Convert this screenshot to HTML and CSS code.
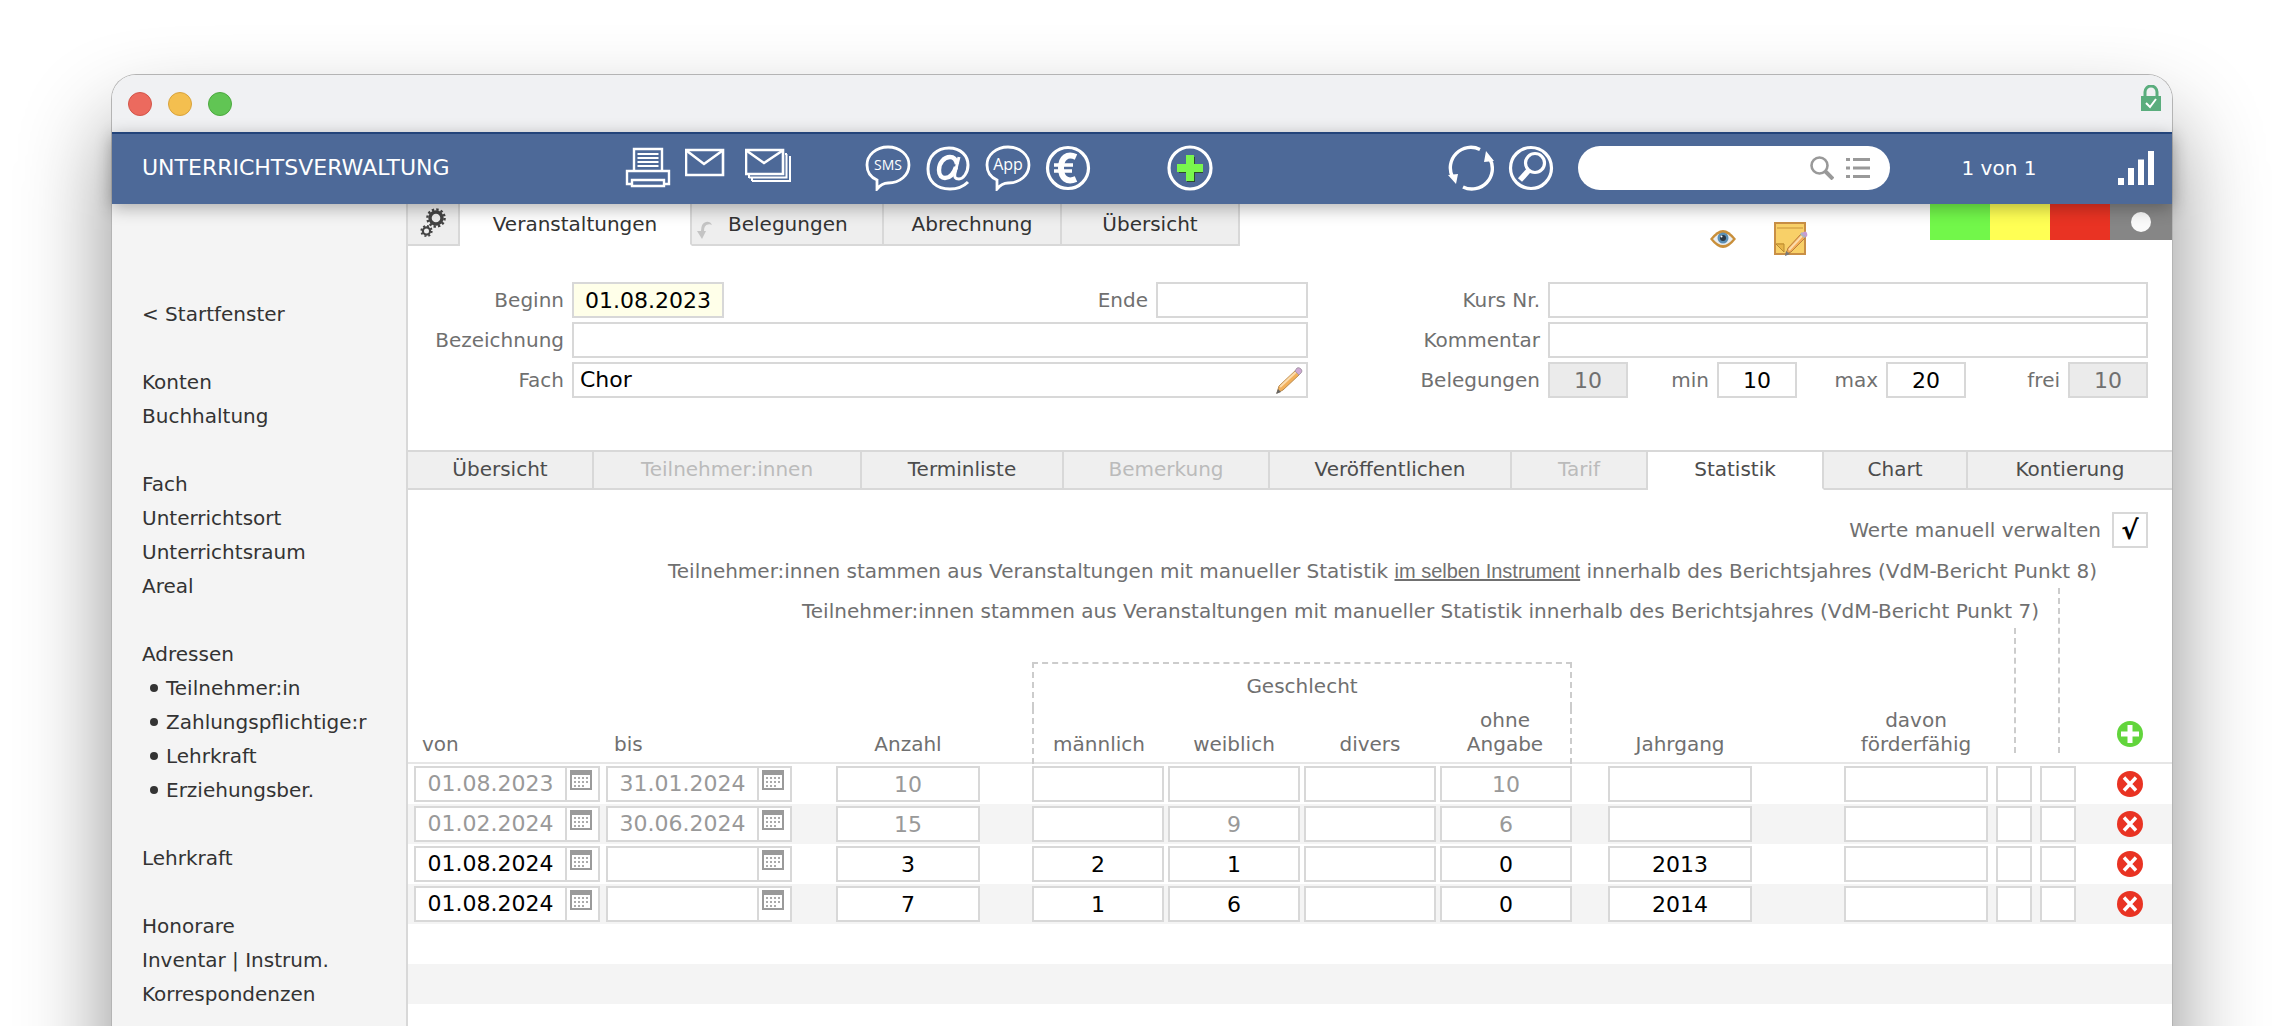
FILE: index.html
```html
<!DOCTYPE html>
<html lang="de">
<head>
<meta charset="utf-8">
<title>Unterrichtsverwaltung</title>
<link rel="stylesheet" href="styles.css">
</head>
<body>
<svg class="sprite" aria-hidden="true">
  <symbol id="calendar" viewBox="0 0 22 20">
    <rect x="1" y="1" width="20" height="18" fill="#fff" stroke="#9a9a9a" stroke-width="2"/>
    <rect width="22" height="5" fill="#9a9a9a"/>
    <path d="M4 8h14M4 12h14M4 16h11" stroke="#aaa" stroke-width="2" stroke-dasharray="2 2"/>
  </symbol>
  <symbol id="remove" viewBox="0 0 26 26">
    <circle cx="13" cy="13" r="13" fill="#e93323"/>
    <path d="M7 6.500l12 13M19 6.500L7 19.500" stroke="#fff" stroke-width="3.400"/>
  </symbol>
</svg>
<div class="window">
  <div class="titlebar">
    <span class="light light-close"></span>
    <span class="light light-min"></span>
    <span class="light light-max"></span>
    <svg class="lock" viewBox="0 0 20 26" width="20" height="26"><path d="M4 13V7a6 6 0 0 1 12 0v6" fill="none" stroke="#5aad7d" stroke-width="3"/><rect y="11" width="20" height="15" fill="#5aad7d"/><path d="M5 18l4 4 6-8" fill="none" stroke="#fff" stroke-width="2"/></svg>
  </div>

  <header class="toolbar">
    <h1>UNTERRICHTSVERWALTUNG</h1>
    <div class="tools tools-main">
      <button type="button" aria-label="Drucken"><svg viewBox="0 0 46 46"><g fill="none" stroke="#fff" stroke-width="2.400"><path d="M9 25V4h28v21"/><path d="M12.500 9h21M12.500 13h21M12.500 17h21M12.500 21h21" stroke-width="1.800"/><path d="M6 39H2V26h42v13h-4"/><path d="M7 41v-6h32v6z"/></g></svg></button>
      <button type="button" aria-label="E-Mail"><svg viewBox="0 0 46 46"><g fill="none" stroke="#fff" stroke-width="2.600"><path d="M1 5h37v25H1z"/><path d="M2 6l17 13L37 6"/></g></svg></button>
      <button type="button" aria-label="Serienmail"><svg viewBox="0 0 46 46"><g fill="none" stroke="#fff"><path d="M1 5h37v24H1z" stroke-width="2.600"/><path d="M2 6l17 12L37 6" stroke-width="2.600"/><path d="M4 32.500h37.500V9M7 36h38V12M40 9h2M44 12h2M4 30v3M7 33v3" stroke-width="2"/></g></svg></button>
      <button type="button" class="after-gap" aria-label="SMS"><svg viewBox="0 0 46 46"><path d="M12 35C5 32 2 26 2 20 2 10 11 2 23 2s21 8 21 18-9 18-21 18q-6 0-11 6z" fill="none" stroke="#fff" stroke-width="2.800"/><text x="23" y="25" class="bubble-text bubble-sms">SMS</text></svg></button>
      <button type="button" aria-label="Adresse"><svg viewBox="0 0 46 46"><g fill="none" stroke="#fff"><path d="M43 37c-4 4-10 7-18 7C11 44 3 36 3 24 3 11 12 3 24 3s19 8 19 17c0 8-5 14-9 14s-5-2-4-6l4-16" stroke-width="3"/><path d="M32 19c-1-5-4-7-7-7-6 0-11 6-11 13 0 6 3 8 6 8 5 0 9-5 11-11" stroke-width="4.400"/></g></svg></button>
      <button type="button" aria-label="App"><svg viewBox="0 0 46 46"><path d="M12 35C5 32 2 26 2 20 2 10 11 2 23 2s21 8 21 18-9 18-21 18q-6 0-11 6z" fill="none" stroke="#fff" stroke-width="2.800"/><text x="23" y="25" class="bubble-text bubble-app">App</text></svg></button>
      <button type="button" aria-label="Euro"><svg viewBox="0 0 46 46"><circle cx="23" cy="23" r="20.500" fill="none" stroke="#fff" stroke-width="3.200"/><g fill="none" stroke="#fff"><path d="M31 12c-9-4-15 1-15 11s6 15 15 11" stroke-width="6"/><path d="M9 20h19M9 26h18" stroke-width="3.400"/></g></svg></button>
      <button type="button" class="after-gap-wide" aria-label="Neu"><svg viewBox="0 0 46 46"><circle cx="23" cy="23" r="21" fill="none" stroke="#fff" stroke-width="3.200"/><path d="M20 12h8v8h8v8h-8v9h-8v-9h-8v-8h8z" fill="#2c4a2c"/><path d="M19 10h8v9h9v8h-9v9h-8v-9h-9v-8h9z" fill="#79f64d"/></svg></button>
    </div>
    <div class="tools tools-right">
      <button type="button" aria-label="Aktualisieren"><svg viewBox="0 0 46 46"><g fill="none" stroke="#fff" stroke-width="3.400"><path d="M32 4.500A20.500 20.500 0 0 0 4.500 32"/><path d="M15 42A20.500 20.500 0 0 0 42 14"/></g><path d="M0 30l10-1-2 10zM36 17l10-1-8-10z" fill="#fff"/></svg></button>
      <button type="button" aria-label="Suchen"><svg viewBox="0 0 46 46"><g fill="none" stroke="#fff"><circle cx="23" cy="23" r="20.500" stroke-width="3.200"/><circle cx="27" cy="18" r="9.500" stroke-width="3.200"/><path d="M21 25L12 35" stroke-width="5.500"/></g></svg></button>
      <div class="search">
        <input type="search" aria-label="Suche">
        <svg viewBox="0 0 24 24" width="24" height="24"><circle cx="9.500" cy="9.500" r="8" fill="none" stroke="#999" stroke-width="2.600"/><path d="M15 15l8 8" stroke="#999" stroke-width="4"/></svg>
        <svg viewBox="0 0 24 22" width="24" height="22"><path d="M0 2.500h4M7 2.500h17M0 11h4M7 11h17M0 19.500h4M7 19.500h17" stroke="#999" stroke-width="3"/></svg>
      </div>
      <span class="counter">1 von 1</span>
      <svg class="bars" viewBox="0 0 38 36" width="38" height="36"><path d="M1 28h6v7H1zM11 18h6v17h-6zM21 9.500h6V35h-6zM31 1h6v34h-6z" fill="#fff"/></svg>
    </div>
  </header>

  <div class="body">
    <nav class="sidebar">
      <ul>
        <li><a href="#">&lt; Startfenster</a></li>
      </ul>
      <ul>
        <li><a href="#">Konten</a></li>
        <li><a href="#">Buchhaltung</a></li>
      </ul>
      <ul>
        <li><a href="#">Fach</a></li>
        <li><a href="#">Unterrichtsort</a></li>
        <li><a href="#">Unterrichtsraum</a></li>
        <li><a href="#">Areal</a></li>
      </ul>
      <ul>
        <li><a href="#">Adressen</a></li>
        <li class="sub"><a href="#">Teilnehmer:in</a></li>
        <li class="sub"><a href="#">Zahlungspflichtige:r</a></li>
        <li class="sub"><a href="#">Lehrkraft</a></li>
        <li class="sub"><a href="#">Erziehungsber.</a></li>
      </ul>
      <ul>
        <li><a href="#">Lehrkraft</a></li>
      </ul>
      <ul>
        <li><a href="#">Honorare</a></li>
        <li><a href="#">Inventar | Instrum.</a></li>
        <li><a href="#">Korrespondenzen</a></li>
      </ul>
    </nav>

    <main class="main">
      <div class="top">
        <div class="tabs">
          <button type="button" class="tab tab-gear" aria-label="Einstellungen"><svg viewBox="0 0 26 30" width="26" height="30"><g fill="none" stroke="#444"><circle cx="16" cy="10" r="6" stroke-width="3.400"/><circle cx="16" cy="10" r="8.600" stroke-width="2.400" stroke-dasharray="2.400 2.100"/><circle cx="6.500" cy="23" r="3.600" stroke-width="2.200"/><circle cx="6.500" cy="23" r="5.200" stroke-width="1.800" stroke-dasharray="2 2.080"/></g></svg></button>
          <button type="button" class="tab tab-active">Veranstaltungen</button>
          <button type="button" class="tab tab-bel"><svg viewBox="0 0 16 18" width="16" height="18"><path d="M15 4Q13 0 9 1 4 2 4 10H0l5 8 4-8H7Q7 4 11 3.500 13 3 15 4z" fill="#c4c4c4"/></svg>Belegungen</button>
          <button type="button" class="tab">Abrechnung</button>
          <button type="button" class="tab">Übersicht</button>
        </div>
        <div class="top-icons">
          <svg viewBox="0 0 28 20" width="28" height="20"><path d="M1 10Q8 1 14 1t13 9q-7 9-13 9T1 10z" fill="#c98f3a"/><path d="M4 10q5-6 10-6t10 6q-5 6-10 6T4 10z" fill="#e9eef2"/><circle cx="14" cy="9" r="5.500" fill="#5b8fb5"/><circle cx="14" cy="9" r="3" fill="#2b3642"/><circle cx="12.500" cy="7.500" r="1" fill="#fff"/></svg>
          <svg viewBox="0 0 36 36" width="36" height="36"><rect x="2" y="2" width="30" height="31" fill="#f8d068" stroke="#c98f45" stroke-width="2"/><path d="M4 7h26" stroke="#d9a748" stroke-width="1.500"/><path d="M3 22h8v9z" fill="#e8b548"/><path d="M3 23h8v8z" fill="none" stroke="#b98a30"/><path d="M13 33l2-6L28 13l4 4-14 14z" fill="#f4ac55" stroke="#b88040"/><path d="M16 29L29 15" stroke="#fbdcae" stroke-width="2"/><path d="M27 13l2-2 4 5-2 1z" fill="#aab4c4"/><path d="M29 12q4-3 5 0t-1 4z" fill="#c79bd4"/><path d="M12 35l1-5 4 3z" fill="#777"/></svg>
        </div>
        <div class="flags">
          <button type="button" class="flag flag-green" aria-label="Grün"></button>
          <button type="button" class="flag flag-yellow" aria-label="Gelb"></button>
          <button type="button" class="flag flag-red" aria-label="Rot"></button>
          <button type="button" class="flag flag-gray" aria-label="Keine"><span class="dot"></span></button>
        </div>
      </div>

      <form class="form">
        <div class="form-col">
          <div class="row">
            <label class="lead" for="beginn">Beginn</label>
            <input id="beginn" class="field date highlight" value="01.08.2023">
            <label class="push" for="ende">Ende</label>
            <input id="ende" class="field date">
          </div>
          <div class="row">
            <label class="lead" for="bez">Bezeichnung</label>
            <input id="bez" class="field grow">
          </div>
          <div class="row">
            <label class="lead" for="fach">Fach</label>
            <div class="field grow picker">
              <input id="fach" value="Chor">
              <svg viewBox="0 0 28 28" width="28" height="28"><path d="M2 27l2-7L21 4l4 4L8 24z" fill="#f3b05a" stroke="#b88a50"/><path d="M5 21L22 5" stroke="#fbdcae" stroke-width="2"/><path d="M20 5l2-3q2-1 4 1t0 4l-2 2z" fill="#cfa9d4" stroke="#a99aa9"/><path d="M1 28l2-5 3 3z" fill="#666"/></svg>
            </div>
          </div>
        </div>
        <div class="form-col form-col-right">
          <div class="row">
            <label class="lead" for="kurs">Kurs Nr.</label>
            <input id="kurs" class="field grow">
          </div>
          <div class="row">
            <label class="lead" for="kommentar">Kommentar</label>
            <input id="kommentar" class="field grow">
          </div>
          <div class="row">
            <label class="lead" for="beleg">Belegungen</label>
            <input id="beleg" class="field num readonly" value="10" readonly>
            <label class="slot" for="min">min</label>
            <input id="min" class="field num" value="10">
            <label class="slot" for="max">max</label>
            <input id="max" class="field num" value="20">
            <label class="push" for="frei">frei</label>
            <input id="frei" class="field num readonly" value="10" readonly>
          </div>
        </div>
      </form>

      <div class="subtabs">
        <button type="button" class="w-186">Übersicht</button>
        <button type="button" class="w-268 off">Teilnehmer:innen</button>
        <button type="button" class="w-202">Terminliste</button>
        <button type="button" class="w-206 off">Bemerkung</button>
        <button type="button" class="w-242">Veröffentlichen</button>
        <button type="button" class="w-136 off">Tarif</button>
        <button type="button" class="w-176 on">Statistik</button>
        <button type="button" class="w-144">Chart</button>
        <button type="button" class="w-202">Kontierung</button>
      </div>

      <section class="stat">
        <div class="manual">
          <label for="manuell">Werte manuell verwalten</label>
          <input type="checkbox" id="manuell" checked>
        </div>
        <p class="note note-8">Teilnehmer:innen stammen aus Veranstaltungen mit manueller Statistik <u>im selben Instrument</u> innerhalb des Berichtsjahres (VdM-Bericht Punkt 8)</p>
        <p class="note note-7">Teilnehmer:innen stammen aus Veranstaltungen mit manueller Statistik innerhalb des Berichtsjahres (VdM-Bericht Punkt 7)</p>

        <table class="grid">
          <colgroup>
            <col class="c-von"><col class="c-bis"><col class="c-anz"><col class="c-sex"><col class="c-sex"><col class="c-sex"><col class="c-ohne"><col class="c-gap"><col><col class="c-dav"><col class="c-p7"><col class="c-p8"><col class="c-act">
          </colgroup>
          <thead>
            <tr class="head-top">
              <td colspan="3"></td>
              <th colspan="4" class="group" scope="colgroup">Geschlecht</th>
              <td colspan="6"></td>
            </tr>
            <tr class="head">
              <th scope="col" class="left">von</th>
              <th scope="col" class="left-bis">bis</th>
              <th scope="col"><div class="w-144">Anzahl</div></th>
              <th scope="col" class="edge-left">männlich</th>
              <th scope="col"><div class="w-132">weiblich</div></th>
              <th scope="col"><div class="w-132">divers</div></th>
              <th scope="col" class="edge-right">ohne<br>Angabe</th>
              <td></td>
              <th scope="col"><div class="w-144">Jahrgang</div></th>
              <th scope="col"><div class="w-144">davon<br>förderfähig</div></th>
              <td class="lead-cell"><span class="leader leader-7"></span></td>
              <td class="lead-cell"><span class="leader leader-8"></span></td>
              <td class="action"><button type="button" aria-label="Zeile hinzufügen"><svg viewBox="0 0 26 26" width="26" height="26"><circle cx="13" cy="13" r="13" fill="#62d53c"/><path d="M13 4v18M4 13h18" stroke="#fff" stroke-width="5"/></svg></button></td>
            </tr>
          </thead>
          <tbody id="rows"></tbody>
        </table>
      </section>
    </main>
  </div>
</div>
<script src="rows.js"></script>
</body>
</html>
```
FILE: rows.js
```js
const rows = [
  { von: "01.08.2023", bis: "31.01.2024", anzahl: "10", ohne: "10", locked: true },
  { von: "01.02.2024", bis: "30.06.2024", anzahl: "15", w: "9", ohne: "6", locked: true },
  { von: "01.08.2024", anzahl: "3", m: "2", w: "1", ohne: "0", jahr: "2013" },
  { von: "01.08.2024", anzahl: "7", m: "1", w: "6", ohne: "0", jahr: "2014" },
  null,
  null
];

const date = (label, value = "") =>
  `<div class="date-field"><input aria-label="${label}" value="${value}"><button type="button" aria-label="Kalender"><svg width="22" height="20"><use href="#calendar"/></svg></button></div>`;
const cell = (label, width, value = "") =>
  `<td><input class="cell ${width}" aria-label="${label}" value="${value}"></td>`;

document.getElementById("rows").innerHTML = rows.map(r => {
  if (!r) return `<tr><td colspan="13"></td></tr>`;
  return `<tr class="${r.locked ? "locked" : ""}">
    <td class="first">${date("von", r.von)}</td><td>${date("bis", r.bis)}</td>
    ${cell("Anzahl", "w-144", r.anzahl)}${cell("männlich", "w-132", r.m)}${cell("weiblich", "w-132", r.w)}
    ${cell("divers", "w-132")}${cell("ohne Angabe", "w-132", r.ohne)}<td></td>
    ${cell("Jahrgang", "w-144", r.jahr)}${cell("davon förderfähig", "w-144")}
    ${cell("Punkt 7", "w-36")}${cell("Punkt 8", "w-36")}
    <td class="action"><button type="button" aria-label="Zeile löschen"><svg width="26" height="26"><use href="#remove"/></svg></button></td>
  </tr>`;
}).join("");
```
FILE: styles.css
```css
* { box-sizing: border-box; }

html, body { height: 100%; }

body {
  margin: 0;
  padding: 75px 112px 0;
  overflow: hidden;
  background: #fff;
  color: #333;
  font: 20px/24px "DejaVu Sans", Verdana, sans-serif;
}

button, input { font: inherit; color: inherit; margin: 0; }
button { padding: 0; border: 0; background: none; }
svg { display: block; }
.sprite { position: absolute; width: 0; height: 0; }

.w-36 { width: 36px; }
.w-132 { width: 132px; }
.w-136 { width: 136px; }
.w-144 { width: 144px; }
.w-176 { width: 176px; }
.w-186 { width: 186px; }
.w-202 { width: 202px; }
.w-206 { width: 206px; }
.w-242 { width: 242px; }
.w-268 { width: 268px; }

/* window frame */
.window {
  display: flex;
  flex-direction: column;
  min-height: calc(100% + 120px);
  border-radius: 24px 24px 0 0;
  background: #fff;
  box-shadow: 0 0 0 1px #b4b4b4, 0 50px 90px rgba(0, 0, 0, .45);
}

.titlebar {
  display: flex;
  align-items: center;
  gap: 16px;
  height: 57px;
  padding: 0 11px 0 16px;
  border-radius: 24px 24px 0 0;
  background: #f0f1f3;
}
.light { width: 24px; height: 24px; border: 1px solid; border-radius: 50%; }
.light-close { background: #ec6a5e; border-color: #d35549; }
.light-min { background: #f4bf4f; border-color: #d9a33c; }
.light-max { background: #61c554; border-color: #4ca93f; }
.lock { margin: 0 0 12px auto; }

/* toolbar */
.toolbar {
  position: relative;
  z-index: 1;
  display: flex;
  align-items: center;
  height: 72px;
  padding: 0 17px 2px 30px;
  border-top: 2px solid #23447a;
  background: #4d6998;
  color: #fff;
  box-shadow: 0 4px 16px rgba(0, 0, 0, .3);
}
.toolbar h1 { flex: 0 0 483px; margin: 0; font-size: 22px; font-weight: 400; }
.tools { display: flex; align-items: center; gap: 14px; }
.tools button svg { width: 46px; height: 46px; }
.after-gap { margin-left: 60px; }
.after-gap-wide { margin-left: 62px; }
.bubble-text { fill: #fff; text-anchor: middle; font-family: "Open Sans", sans-serif; }
.bubble-sms { font-size: 14px; }
.bubble-app { font-size: 16px; }
.tools-right { margin-left: auto; }
.search {
  display: flex;
  align-items: center;
  gap: 12px;
  width: 312px;
  height: 44px;
  margin-left: 10px;
  padding: 0 20px;
  border-radius: 22px;
  background: #fff;
}
.search input { flex: 1; min-width: 0; border: 0; outline: 0; background: none; color: #333; }
.counter { width: 142px; margin: 0 33px 0 24px; text-align: center; }

/* layout */
.body { display: flex; flex: 1; }
.sidebar {
  flex: 0 0 296px;
  padding: 93px 0 0 30px;
  border-right: 2px solid #d8d8d8;
  background: #f4f4f4;
  line-height: 34px;
}
.sidebar ul { margin: 0 0 34px; padding: 0; list-style: none; }
.sidebar a { color: inherit; text-decoration: none; }
.sub { display: flex; align-items: center; padding-left: 8px; }
.sub::before {
  content: "";
  width: 8px;
  height: 8px;
  margin-right: 8px;
  border-radius: 50%;
  background: #333;
}
.main { flex: 1; min-width: 0; }

.top { display: flex; height: 78px; }
.tabs { display: flex; flex: 1; align-items: flex-start; }
.tab {
  width: 178px;
  height: 42px;
  border: solid #d8d8d8;
  border-width: 0 2px 2px 0;
  background: #eee;
}
.tab-gear { display: flex; align-items: center; justify-content: center; width: 52px; padding-bottom: 2px; }
.tab-active { width: 232px; border-bottom-color: #fff; background: #fff; }
.tab-bel { display: flex; align-items: center; gap: 15px; width: 192px; padding-left: 5px; }
.tab-bel svg { margin-top: 12px; }
.top-icons { display: flex; align-items: center; gap: 36px; margin-right: 121px; padding-bottom: 8px; }
.flags { display: flex; align-items: flex-start; }
.flag { width: 60px; height: 36px; }
.flag-green { background: #72f74a; }
.flag-yellow { background: #ffff54; }
.flag-red { background: #e93323; }
.flag-gray { display: grid; place-items: center; width: 62px; background: #868686; }
.dot { width: 20px; height: 20px; border-radius: 50%; background: #fafafa; }

/* course form */
.form { display: flex; justify-content: space-between; padding: 0 24px 52px; color: #707070; }
.form-col { display: flex; flex-direction: column; gap: 4px; width: 876px; }
.form-col-right { width: 730px; }
.row { display: flex; align-items: center; }
.lead { flex-shrink: 0; width: 132px; margin-right: 8px; text-align: right; }
.form-col-right .lead { width: 122px; }
.push { margin: 0 8px 0 auto; }
.slot { width: 81px; margin-right: 8px; text-align: right; }
.field {
  height: 36px;
  padding: 0 6px;
  border: 2px solid #d8d8d8;
  background: #fff;
  color: #000;
  font-size: 22px;
}
.grow { flex: 1; min-width: 0; }
.date { width: 152px; padding: 0; text-align: center; }
.highlight { background: #ffffe9; }
.num { width: 80px; padding: 0; text-align: center; }
.readonly { background: #ebebeb; color: #707070; }
.picker { display: flex; align-items: center; padding-right: 3px; }
.picker input { flex: 1; min-width: 0; padding: 0; border: 0; outline: 0; }

/* inner tabs */
.subtabs { display: flex; border: solid #d8d8d8; border-width: 2px 0 0; color: #4c4c4c; }
.subtabs button {
  height: 38px;
  padding-bottom: 2px;
  border: solid #d8d8d8;
  border-width: 0 2px 2px 0;
  background: #efefef;
}
.subtabs button:last-child { flex-grow: 1; border-right: 0; }
.subtabs .off { color: #bbb; }
.subtabs .on { border-bottom-color: #fff; background: #fff; }

/* statistics */
.stat { color: #707070; }
.manual {
  display: flex;
  align-items: center;
  justify-content: flex-end;
  gap: 11px;
  padding: 22px 24px 0 0;
}
.manual input {
  appearance: none;
  display: grid;
  place-items: center;
  width: 36px;
  height: 36px;
  border: 2px solid #d8d8d8;
  background: #fff;
  color: #000;
}
.manual input:checked::before { content: "√"; font-size: 26px; font-weight: 700; }
.note { height: 40px; margin: 0; text-align: right; line-height: 40px; white-space: nowrap; }
.note u { font-family: "Liberation Sans", Arial, sans-serif; line-height: 24px; }
.note-8 { margin-top: 3px; padding-right: 75px; }
.note-7 { padding-right: 133px; }

.grid { width: 100%; margin-top: 31px; border-spacing: 0; table-layout: fixed; }
.c-von { width: 198px; }
.c-bis { width: 230px; }
.c-anz { width: 196px; }
.c-sex { width: 136px; }
.c-ohne { width: 132px; }
.c-gap { width: 36px; }
.c-dav { width: 152px; }
.c-p7 { width: 44px; }
.c-p8 { width: 72px; }
.c-act { width: 60px; }
.grid th, .grid td { padding: 0; font-weight: 400; }
.grid thead { background: linear-gradient(#e6e6e6, #e6e6e6) bottom / 100% 2px no-repeat; }
.head-top { height: 46px; }
.head { height: 56px; }
.grid .head th { padding-bottom: 8px; vertical-align: bottom; }
.grid .group { border: 2px dashed #ccc; border-bottom: 0; }
.grid .edge-left { padding-right: 4px; border-left: 2px dashed #ccc; }
.grid .edge-right { border-right: 2px dashed #ccc; }
.grid .head .left { padding-left: 14px; text-align: left; }
.grid .head .left-bis { padding-left: 8px; text-align: left; }
.lead-cell { position: relative; }
.leader { position: absolute; left: 18px; bottom: 11px; border-left: 2px dashed #ccc; }
.leader-7 { height: 125px; }
.leader-8 { height: 165px; }
.action button { display: grid; place-items: center; width: 36px; height: 36px; }
.grid .head .action { padding-top: 8px; vertical-align: top; }

.grid tbody tr { height: 40px; color: #000; }
.grid tbody tr:nth-child(even) { background: #f4f4f4; }
.grid tbody .locked { color: #999; }
.grid tbody .first { padding-left: 6px; }
.cell, .date-field {
  display: block;
  height: 36px;
  border: 2px solid #d8d8d8;
  background: #fff;
  font-size: 22px;
}
.cell { padding: 0; text-align: center; }
.date-field { display: flex; width: 186px; }
.date-field input { width: 149px; padding: 0; border: 0; text-align: center; background: none; }
.date-field button {
  display: flex;
  flex: 1;
  padding: 2px 0 0 3px;
  border-left: 2px solid #d8d8d8;
}
```
